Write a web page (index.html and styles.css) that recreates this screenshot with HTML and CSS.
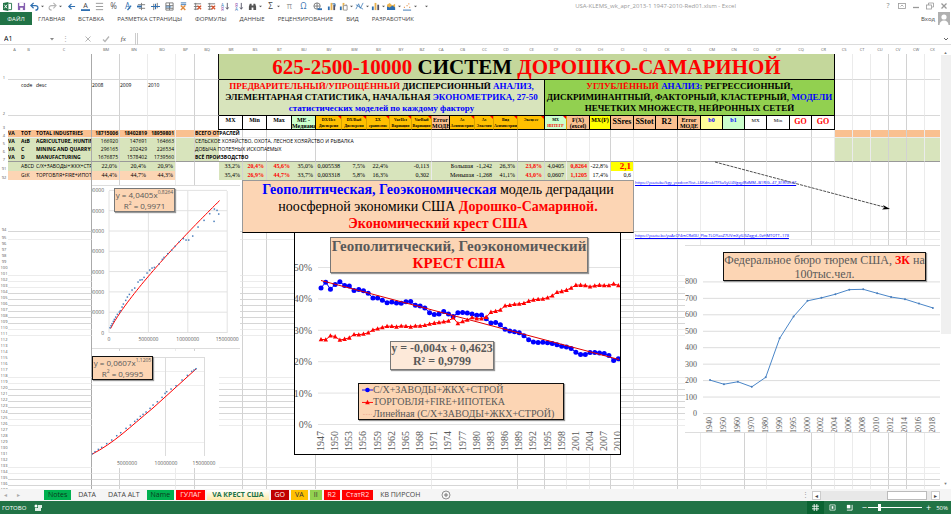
FILE: index.html
```html
<!DOCTYPE html>
<html lang="ru">
<head>
<meta charset="utf-8">
<title>Excel</title>
<link rel="stylesheet" href="styles.css">
</head>
<body>
<header class="titlebar">
  <div class="quick" id="quick"></div>
  <div class="doc-title">USA-KLEMS_wk_apr_2013-1 1947-2010-Red01.xlsm - Excel</div>
  <div class="win-buttons">
    <button type="button" aria-label="Справка">?</button>
    <button type="button" aria-label="Лента"><svg viewBox="0 0 8 8"><rect x=".5" y="1.5" width="7" height="5"/><path d="M2.500 4.500L4 3L5.500 4.500"/></svg></button>
    <button type="button" aria-label="Свернуть"><svg viewBox="0 0 8 8"><path d="M1 5.500h6" stroke-width="1.300"/></svg></button>
    <button type="button" aria-label="Окно"><svg viewBox="0 0 8 8"><rect x=".5" y="3" width="5" height="4"/><path d="M2.500 3V1h5v4H6"/></svg></button>
    <button type="button" aria-label="Закрыть"><svg viewBox="0 0 8 8"><path d="M1.500 1.500l5 5m0-5l-5 5" stroke-width="1.300"/></svg></button>
  </div>
</header>
<nav class="ribbon">
  <button type="button" class="file">ФАЙЛ</button>
  <button type="button">ГЛАВНАЯ</button>
  <button type="button">ВСТАВКА</button>
  <button type="button">РАЗМЕТКА СТРАНИЦЫ</button>
  <button type="button">ФОРМУЛЫ</button>
  <button type="button">ДАННЫЕ</button>
  <button type="button">РЕЦЕНЗИРОВАНИЕ</button>
  <button type="button">ВИД</button>
  <button type="button">РАЗРАБОТЧИК</button>
  <a href="#" class="login">Вход</a>
  <svg class="avatar" viewBox="0 0 12 13"><rect width="12" height="13" fill="#b0b0b0"/><circle cx="6" cy="5" r="2.600" fill="#fff"/><path d="M1.500 13c0-3 2-4.500 4.500-4.500s4.500 1.500 4.500 4.500z" fill="#fff"/></svg>
</nav>
<div class="formula">
  <input class="name-box" aria-label="Имя" value="A1">
  <svg class="drop" viewBox="0 0 6 6"><path d="M1 2h4L3 4.500z" fill="#888"/></svg>
  <span class="dots">⋮</span>
  <div class="fx">
    <svg viewBox="0 0 8 8"><path d="M1.500 1.500l5 5m0-5l-5 5" stroke="#b5b5b5" fill="none"/></svg>
    <svg viewBox="0 0 8 8"><path d="M1 4.500l2 2l4-5" stroke="#b5b5b5" fill="none" stroke-width="1.300"/></svg>
    <i>fx</i>
  </div>
  <input class="formula-box" aria-label="Формула">
  <svg class="drop" viewBox="0 0 6 6"><path d="M1 2l2 2l2-2" stroke="#666" fill="none"/></svg>
</div>
<main class="work">
  <div class="sheet">
    <table class="grid" id="grid">
      <colgroup id="cols"></colgroup>
      <thead><tr id="letters"></tr></thead>
      <tbody id="top">
        <tr class="r1"><th>1</th><td></td><td></td><td class="edge-l"></td><td class="s"></td><td class="w"></td><td class="w"></td><td class="s"></td><td class="edge"></td>
          <td colspan="27" class="title"><b>625-2500-10000</b> СИСТЕМ <b>ДОРОШКО-САМАРИНОЙ</b></td>
          <td class="w"></td><td class="w"></td><td class="s"></td><td class="s"></td><td class="w"></td><td></td></tr>
        <tr class="r2"><th>2</th><td></td><td>code</td><td class="edge-l">desc</td><td class="s">2008</td><td class="w">2009</td><td class="w">2010</td><td class="s"></td><td class="edge"></td>
          <td colspan="14" class="sub light"><b>ПРЕДВАРИТЕЛЬНЫЙ/УПРОЩЁННЫЙ</b> ДИСПЕРСИОННЫЙ <i>АНАЛИЗ,</i><br>ЭЛЕМЕНТАРНАЯ СТАТИСТИКА, НАЧАЛЬНАЯ <i>ЭКОНОМЕТРИКА, 27-50</i><br><i>статистических моделей по каждому фактору</i></td>
          <td colspan="13" class="sub vivid"><b>УГЛУБЛЁННЫЙ</b> <i>АНАЛИЗ:</i> РЕГРЕССИОННЫЙ,<br>ДИСКРИМИНАНТНЫЙ, ФАКТОРНЫЙ, КЛАСТЕРНЫЙ, <i>МОДЕЛИ</i><br>НЕЧЕТКИХ МНОЖЕСТВ, НЕЙРОННЫХ СЕТЕЙ</td>
          <td class="w"></td><td class="w"></td><td class="s"></td><td class="s"></td><td class="w"></td><td></td></tr>
        <tr class="r3"><th>3</th><td></td><td></td><td class="edge-l"></td><td class="s"></td><td class="w"></td><td class="w"></td><td class="s"></td><td class="edge"></td>
          <td class="k">MX</td><td class="k">Min</td><td class="k">Max</td><td class="k mint"><div>ME - Медиана</div></td>
          <td class="k gold t"><div>DX/Нез Дисперсия</div></td><td class="gold k t"><div>DX/Выб Дисперсия</div></td><td class="gold k t"><div>ΣX сравнение</div></td><td class="gold k t"><div>VarНез Вариация</div></td><td class="gold k t"><div>VarВыб Вариация</div></td>
          <td class="k peach"><div>Error МОДЕ</div></td>
          <td class="k gold t"><div>As Асимметрия</div></td><td class="k gold t"><div>As Эластич</div></td><td class="k gold t"><div>Вид Асимметрии</div></td><td class="k gold t m"><div>Эксцесс</div></td>
          <td class="k mint t"><div>MX <b>ИНТЕГР</b></div></td><td class="k peach"><div>F(X) (excel)</div></td><td class="k yellow">MX(F)</td>
          <td class="k peach big">SSres</td><td class="k peach big">SStot</td><td class="k peach big">R2</td><td class="k peach"><div>Error МОДЕ</div></td>
          <td class="k pale"><i>b0</i></td><td class="k mint"><i>b1</i></td><td class="k tiny">MX</td><td class="k tiny">Min</td><td class="k big"><b>GO</b></td><td class="k big edge"><b>GO</b></td>
          <td class="w"></td><td class="w"></td><td class="s"></td><td class="s"></td><td class="w"></td><td></td></tr>
      </tbody>
      <tbody id="data"></tbody>
      <tbody id="rest"></tbody>
    </table>

    <svg class="arrow" viewBox="0 0 180 52"><path d="M1 1L170 46" stroke="#222" stroke-dasharray="3 1" stroke-width=".8" fill="none"/><path d="M176 48l-7-4l1.500 2.500l-2.500 2z" fill="#000"/></svg>
    <a href="#" class="link link-a">https://youtube/kgy_ycxdccn?list=L6KdnokITFSu5yLI4VgqyIRdMM=B1RIG=47_81RIG=47</a>
    <a href="#" class="link link-b">https://youtu.be/yuAcCF4mCRd0U_Plw-TLOYaoZ7UVmXyIUSZqg;d=0zHMTOTT=178</a>

    <div class="note"><i>Геополитическая, Геоэкономическая</i> модель деградации<br>ноосферной экономики США <b>Дорошко-Самариной.</b><br><b>Экономический крест США</b></div>

    <figure class="chart fit-a"><svg id="fitA" viewBox="0 0 148 162"></svg><figcaption>y = 4,0405x<sup>0,8264</sup><br>R<sup>2</sup> = 0,9971</figcaption></figure>
    <figure class="chart fit-b"><svg id="fitB" viewBox="0 0 127 117"></svg><figcaption>y = 0,0607x<sup>1,1205</sup><br>R<sup>2</sup> = 0,9995</figcaption></figure>

    <figure class="chart cross">
      <svg id="cross" viewBox="0 0 325 221"></svg>
      <figcaption>Геополитический, Геоэкономический<br><b>КРЕСТ США</b></figcaption>
      <div class="equation">y = -0,004x + 0,4623<br>R² = 0,9799</div>
      <ul class="legend">
        <li><svg viewBox="0 0 12 8"><path d="M0 4h12" stroke="#00f"/><circle cx="6" cy="4" r="2.500" fill="#00f"/></svg>С/Х+ЗАВОДЫ+ЖКХ+СТРОЙ</li>
        <li><svg viewBox="0 0 12 8"><path d="M0 4.500h12" stroke="red"/><path d="M6 1.500l2.500 5h-5z" fill="red"/></svg>ТОРГОВЛЯ+FIRE+ИПОТЕКА</li>
        <li><svg viewBox="0 0 12 8"><path d="M1 4.500h10" stroke="#e9a08c" stroke-dasharray="2 1" stroke-width=".6"/></svg>Линейная (С/Х+ЗАВОДЫ+ЖКХ+СТРОЙ)</li>
      </ul>
    </figure>

    <figure class="chart prison"><svg id="prison" viewBox="0 0 255 186"></svg><figcaption>Федеральное бюро тюрем США, <b>ЗК</b> на 100тыс.чел.</figcaption></figure>
  </div>
  <div class="vscroll"><span>▲</span><div></div><span>▼</span></div>
</main>
<footer>
  <div class="tabs">
    <span class="nav">◂</span><span class="nav">▸</span>
    <button type="button" class="green first">Notes</button>
    <button type="button" class="plain">DATA</button>
    <button type="button" class="plain">DATA ALT</button>
    <button type="button" class="green">Name</button>
    <button type="button" class="red">ГУЛАГ</button>
    <button type="button" class="active">VA КРЕСТ США</button>
    <button type="button" class="dark">GO</button>
    <button type="button" class="amber">VA</button>
    <button type="button" class="lime">II</button>
    <button type="button" class="red">R2</button>
    <button type="button" class="red">СтатR2</button>
    <button type="button" class="plain">КВ ПИРСОН</button>
    <button type="button" class="add" aria-label="Новый лист"><svg viewBox="0 0 10 10"><circle cx="5" cy="5" r="4" fill="none" stroke="#777" stroke-width=".8"/><path d="M5 3v4M3 5h4" stroke="#777"/></svg></button>
    <div class="hscroll"><span class="grip">⋮</span><span class="arr">◂</span><div class="track"><div></div></div><span class="arr">▸</span></div>
  </div>
  <div class="status">
    <span>ГОТОВО</span>
    <svg class="rec" viewBox="0 0 8 8"><circle cx="2" cy="2" r="1.500" fill="#fff"/><path d="M4 1h4v3H4zM1 4h6v3H1z" fill="#dfeee5"/></svg>
    <div class="views">
      <button type="button" class="on" aria-label="Обычный"><svg viewBox="0 0 8 8"><path d="M0 2.500h8M0 5.500h8M2.500 0v8M5.500 0v8" stroke="#fff"/></svg></button>
      <button type="button" aria-label="Разметка"><svg viewBox="0 0 8 8"><path d="M1 1h6v6H1z" fill="none" stroke="#cfe3d7"/><path d="M3 2.500h2v3H3z" fill="#fff"/></svg></button>
      <button type="button" aria-label="Страничный"><svg viewBox="0 0 8 8"><path d="M1 1h4v4H1z" fill="#fff"/><path d="M7 1v6H1" fill="none" stroke="#fff"/></svg></button>
    </div>
    <span class="sign">−</span>
    <input type="range" aria-label="Масштаб" min="10" max="400" value="90">
    <span class="sign">+</span>
    <span class="pct">50%</span>
  </div>
</footer>
<script src="app.js"></script>
</body>
</html>
```
FILE: styles.css
```css
* { box-sizing: border-box; }
body { margin: 0; height: 100vh; display: flex; flex-direction: column; overflow: hidden; background: #fff; font-family: "Open Sans", "Noto Sans", sans-serif; font-size: 6px; color: #444; }
button { border: 0; padding: 0; margin: 0; background: none; font: inherit; color: inherit; }
input { border: 0; padding: 0; margin: 0; background: none; font: inherit; outline: 0; min-width: 0; }
a { color: inherit; text-decoration: none; }
svg { display: block; }

.titlebar { display: flex; align-items: center; height: 12px; flex: none; }
.quick { display: flex; flex: 1; }
.quick button { width: 14px; height: 12px; display: flex; align-items: center; justify-content: center; }
.quick .wide { width: 18px; }
.quick .mid { width: 16px; }
.quick svg { width: 9px; height: 9px; flex: none; overflow: visible; }
.quick .caret { width: 3px; height: 3px; margin-left: 2px; }
.doc-title { color: #999; margin-right: 148px; }
.win-buttons { display: flex; gap: 6px; color: #888; padding-right: 3px; }
.win-buttons button { width: 8px; height: 8px; line-height: 8px; font-size: 7px; }
.win-buttons svg { width: 8px; height: 8px; fill: none; stroke: #999; stroke-width: .8; }

.ribbon { display: flex; align-items: center; gap: 13px; height: 13px; flex: none; margin-bottom: 8px; font-size: 6px; }
.ribbon .file { background: #217346; color: #fff; width: 32px; height: 13px; margin-right: -7px; }
.login { margin-left: auto; }
.avatar { width: 12px; height: 13px; margin: 0 1px 0 -10px; }

.formula { display: flex; align-items: center; height: 12px; flex: none; border-bottom: 1px solid #dcdcdc; margin-bottom: 2px; font-size: 7px; padding-right: 2px; }
.name-box { width: 49px; padding-left: 4px; }
.drop { width: 6px; height: 6px; }
.dots { width: 20px; text-align: center; color: #aaa; }
.fx { display: flex; align-items: center; justify-content: space-around; width: 61px; height: 12px; border-right: 1px solid #ccc; padding: 0 4px; font-family: "Liberation Serif", serif; }
.fx svg { width: 8px; height: 8px; }
.formula-box { flex: 1; height: 12px; margin-left: 1px; border-left: 1px solid #ccc; }

.work { flex: 1; display: flex; min-height: 0; }
.sheet { flex: 1; position: relative; overflow: hidden; min-width: 0; }
.vscroll { width: 11px; display: flex; flex-direction: column; align-items: center; font-size: 4px; color: #777; padding: 3px 0; }
.vscroll div { width: 10px; height: 64%; background: #f0f0f0; margin-bottom: auto; }

.grid { width: 100%; table-layout: fixed; border-collapse: separate; border-spacing: 0; font-size: 5px; line-height: 6px; color: #000; }
.grid td, .grid th { padding: 0; border: 0 solid #e4e4e4; font-weight: normal; white-space: nowrap; vertical-align: top; }
.grid thead th { height: 7px; font-size: 4px; line-height: 6px; color: #666; }
.grid tbody th { font-size: 4px; line-height: 5px; color: #555; text-align: center; vertical-align: bottom; }
.grid td.s { border-right: 1px solid #d2d2d2; }
.grid td.w { border-right: 1px solid #ebebeb; }
.grid td.edge-l { border-right: 1px solid #aaa; }
.grid td.edge { border-right: 1px solid #111; }
.grid b { color: red; }
.grid i { color: #00f; font-style: normal; font-weight: bold; }

.r1 { height: 26px; }
.r2 { height: 36px; }
.r3 { height: 14px; }
.r1 td, .r2 td { border-bottom: 1px solid #d8d8d8; }
.r2 td { padding-top: 2px; }
.grid .title { background: #c4d79b; border-bottom: 1px solid #000; border-right: 1px solid #000; text-align: center; vertical-align: middle; font: bold 21px/24px "Liberation Serif", serif; }
.grid .sub { font: bold 9px/11px "Liberation Serif", serif; text-align: center; vertical-align: middle; padding: 0; border-bottom: 1px solid #000; border-right: 1px solid #000; }
.light { background: #d8e4bc; }
.vivid { background: #92d050; }
.grid .k { font: bold 6px/7px "Liberation Serif", serif; text-align: center; border-bottom: 1px solid #000; border-right: 1px solid #000; padding-top: 1px; overflow: hidden; }
.k div { height: 12px; overflow: hidden; white-space: normal; line-height: 6px; }
.grid .t { font-size: 4px; border-right-color: #d9a300; position: relative; }
.t::after { content: ""; position: absolute; top: 0; right: 0; border-top: 3px solid red; border-left: 3px solid transparent; }
.grid .m, .grid .edge { border-right-color: #000; }
.grid .big { font-size: 8px; line-height: 10px; }
.grid .tiny { font-size: 5px; font-weight: normal; }
.mint { background: #ccffcc; }
.gold { background: #ffc000; }
.peach { background: #fac090; }
.yellow { background: #ff0; }
.pale { background: #ff9; }
.salmon { background: #fcd5b4; }

.d { height: 8px; }
.d td { font-size: 5px; line-height: 7px; }
.d td.bold { font-weight: bold; }
.grid .line td { border-bottom: 1px solid #999; }
.grid .num { text-align: right; padding-right: 1px; }
.grid .clip { overflow: hidden; }
.p { height: 9px; }
.p td { line-height: 9px; }
.p td.n { font-family: "Liberation Serif", serif; font-size: 6px; text-align: right; padding-right: 2px; overflow: hidden; }
.p td.hot { color: red; font-weight: bold; }
.grid .p td.score { background: #ff0; font-size: 9px; }
.tall { height: 52px; }
.mid { height: 8px; }
.row { height: 6px; }
.grid .row th { line-height: 5px; }
.ln-w td { border-bottom: 1px solid #ececec; }
.ln-s td { border-bottom: 1px solid #d6d6d6; }

.arrow { position: absolute; left: 714px; top: 114px; width: 180px; height: 52px; }
.link { position: absolute; left: 635px; color: #00f; text-decoration: underline; font-size: 4px; line-height: 5px; white-space: nowrap; }
.link-a { top: 133px; }
.link-b { top: 186px; }
.note { position: absolute; left: 242px; top: 133px; width: 392px; height: 53px; background: #fcd5b4; border: 1px solid #999; border-bottom-color: #000; text-align: center; font: 14px/17px "Liberation Serif", serif; color: #000; white-space: nowrap; }
.note i, .note b { font-style: normal; font-weight: bold; }
.note i { color: #00f; }
.note b { color: red; }

.chart { position: absolute; margin: 0; background: #fff; overflow: hidden; color: #595959; }
.chart > svg { width: 100%; height: 100%; }
.chart figcaption, .equation, .legend { position: absolute; background: #fcd5b4; text-align: center; white-space: nowrap; border: 1px solid #777; box-shadow: 1px 1px 1px #999; }
.chart b { color: red; }
.chart text { fill: #595959; }
.fit-a { left: 92px; top: 138px; width: 148px; height: 164px; border-top: 1px solid #ddd; border-bottom: 1px solid #ddd; }
.fit-b { left: 92px; top: 304px; width: 127px; height: 117px; }
.fit-a figcaption, .fit-b figcaption { width: 61px; height: 24px; font-size: 8px; line-height: 11px; }
.fit-a figcaption { left: 22px; top: 2px; }
.fit-b figcaption { left: 0; top: 5px; border-color: #111; }
sup { font-size: 5px; line-height: 0; }
.cross { left: 294px; top: 185px; width: 327px; height: 223px; border: 1px solid #000; font-family: "Liberation Serif", serif; }
.cross figcaption { left: 35px; top: 4px; width: 258px; height: 36px; font-weight: bold; font-size: 15px; line-height: 17px; }
.equation { left: 95px; top: 108px; width: 104px; height: 29px; background: #fde9d9; font-weight: bold; font-size: 12px; line-height: 13px; }
.legend { left: 63px; top: 150px; width: 206px; height: 37px; margin: 0; padding: 0 3px; list-style: none; border-color: #111; font-size: 10px; line-height: 12px; }
.legend li { display: flex; align-items: center; }
.legend svg { width: 11px; height: 8px; }
.prison { left: 685px; top: 198px; width: 255px; height: 188px; border-top: 1px solid #ddd; border-bottom: 1px solid #ddd; font-family: "Liberation Serif", serif; }
.prison figcaption { left: 38px; top: 6px; width: 203px; height: 29px; font-size: 12px; line-height: 14px; white-space: normal; border-color: #111; }
.axis8 { font-size: 8px; }
.axis5 { font-size: 5px; }
.axis10 { font-size: 10px; }

.tabs { display: flex; align-items: center; height: 12px; background: #f5f5f5; font-size: 7px; line-height: 10px; gap: 2px; }
.nav { width: 11px; text-align: center; color: #aaa; font-size: 6px; }
.tabs button { height: 10px; padding: 0 4px; white-space: nowrap; }
.tabs .first { margin-left: 18px; }
.tabs .plain { padding: 0 5px; }
.tabs .green { background: #00b050; color: #0b3a1e; }
.tabs .red { background: red; color: #ffe0e0; }
.tabs .dark { background: #c00000; color: #fff; }
.tabs .amber { background: #ffc000; color: #333; }
.tabs .lime { background: #92d050; color: #333; }
.tabs .active { background: linear-gradient(#fff, #ffe9a8); color: #217346; font-weight: bold; padding: 0 5px; }
.tabs .add { margin-left: 10px; }
.add svg { width: 10px; height: 10px; }
.hscroll { margin-left: auto; display: flex; align-items: center; padding-right: 11px; }
.hscroll .grip { width: 10px; color: #999; }
.arr { width: 9px; height: 9px; line-height: 8px; background: #fff; border: 1px solid #ccc; text-align: center; font-size: 6px; }
.track { width: 110px; height: 9px; background: #e8e8e8; display: flex; justify-content: flex-end; padding-right: 4px; }
.track div { width: 40px; background: #fff; border: 1px solid #bbb; }
.status { display: flex; align-items: center; height: 13px; background: #217346; color: #fff; padding: 0 3px 0 2px; }
.rec { width: 8px; height: 8px; margin-left: 8px; }
.views { margin-left: auto; display: flex; }
.views button { width: 17px; height: 13px; display: flex; align-items: center; justify-content: center; }
.views .on { background: #0a6332; }
.views svg { width: 7px; height: 7px; }
.sign { font-size: 9px; line-height: 9px; margin: 0 1px 0 4px; }
.sign + .pct { margin-left: 4px; }
.status input { appearance: none; width: 54px; height: 9px; background: linear-gradient(#fff, #fff) center / 100% 1px no-repeat; }
.status input::-webkit-slider-thumb { appearance: none; width: 3px; height: 7px; background: #fff; }
```
FILE: app.js
```js
const byId = id => document.getElementById(id);

/* Quick access toolbar */
const B = '#2f6fb0', G = '#777', O = '#e08a3c';
const glyph = (t, c, extra = '') => `<text x="5" y="8" text-anchor="middle" font-size="9" fill="${c}">${t}</text>${extra}`;
const bars = extra => `<path d="M1 9V5h2v4z" fill="${B}"/><path d="M4 9V1h2v8z" fill="#e9b24f"/><path d="M7 9V3h2v6z" fill="#556"/>${extra}`;
const table = c => `<path d="M1 2h8M1 5h8M1 8h5M3 1v8" stroke="${G}" fill="none"/><path d="M5 4l4 4m0-4l-4 4" stroke="${c}" stroke-width="1.400"/>`;
const sort = '<path d="M7 1v7m-1.500-2L7 8l1.500-2" stroke="#556" fill="none"/>';
const tools = [
  ['Excel', '', '<path d="M0 1l6-1v10L0 9z" fill="#217346"/><path d="M6 1.500h3.500v7H6" fill="none" stroke="#217346"/><path d="M1.500 3l3 4m0-4l-3 4" stroke="#fff"/>'],
  ['Сохранить', '', '<path d="M1 1h8v8H1z" fill="#8660b0"/><path d="M2.500 1h5v3.500h-5zM3.500 6.500h3V9h-3z" fill="#fff"/>'],
  ['Отменить', 'wide', `<path d="M1 4h5c4 0 3.500 5 0 5M4 1L1 4l3 3" stroke="${B}" fill="none" stroke-width="1.400"/>`],
  ['Вернуть', 'wide', '<path d="M9 4H4C0 4 .5 9 4 9M6 1l3 3l-3 3" stroke="#b5b5b5" fill="none" stroke-width="1.200"/>'],
  ['Назад', '', `<path d="M9 5H2m3-3L2 5l3 3" stroke="${B}" fill="none" stroke-width="1.300"/>`],
  ['Цвет текста', '', `<text x="5" y="7" text-anchor="middle" font-size="8" fill="#444">A</text><path d="M0 9h10" stroke="${B}" stroke-width="2"/>`],
  ['Выравнивание', '', '<path d="M1 1.500h8M1 5h8M1 8.500h8" stroke="#777" stroke-width=".8"/>'],
  ['Процент', '', glyph('%', '#555')],
  ['Шрифт', '', glyph('A', B, `<path d="M5 9l4-5" stroke="${B}" stroke-width="1.500"/>`)],
  ['Столбцы', '', `<path d="M1 3h8M2 7h7M5 1v8" stroke="${G}"/><path d="M0 5h5" stroke="${B}" stroke-width="2"/>`],
  ['Строки', '', `<path d="M3 2v7M7 1v6" stroke="${G}"/><path d="M0 5h10M5 2v6" stroke="${B}" stroke-width="1.300"/>`],
  ['Вставить', '', `<path d="M1 1h8v8H1zM1 4h8M1 7h8M5 1v8" fill="none" stroke="${G}"/><path d="M1 5.500h6" stroke="${B}"/>`],
  ['Удалить', '', `<path d="M2 1h6M2 3h6" stroke="${B}"/><path d="M2 4l5 5m0-5l-5 5" stroke="${O}" stroke-width="1.500"/>`],
  ['Удалить строки', '', table('#d9532c')],
  ['Удалить лист', '', table('#d9532c')],
  ['А-Я', '', `<text x="0" y="5" font-size="5" fill="${B}">А</text><text x="0" y="10" font-size="5" fill="#84a">Я</text>${sort}`],
  ['Я-А', '', `<text x="0" y="5" font-size="5" fill="#84a">Я</text><text x="0" y="10" font-size="5" fill="${B}">А</text>${sort}`],
  ['Найти', 'wide', '<path d="M1 9V5l1-3h2v2h2V2h2l1 3v4H6V6H4v3z" fill="#555"/>'],
  ['Сумма', 'wide', glyph('Σ', '#444')],
  ['Пи', '', glyph('π', '#999')],
  ['Символ', '', glyph('Ω', B)],
  ['Ссылка', '', `<circle cx="4.500" cy="4.500" r="3.500" fill="none" stroke="${G}"/><path d="M1 4.500h7M4.500 1v7" stroke="${G}"/><path d="M5 8h5" stroke="${B}" stroke-width="2"/>`],
  ['Диаграмма', '', bars(`<path d="M6 2h3v3" stroke="${B}" fill="none"/>`)],
  ['Сводная', 'mid', bars('<path d="M5 4h4v5H5z" fill="#fff" stroke="#999"/>')],
  ['Функции', 'mid', `<path d="M1 8L4 2l2 5l3-6M1 3l8 5" stroke="${B}" fill="none" stroke-width=".8"/>`],
  ['Гистограмма', 'mid', bars('')],
  ['С областями', 'mid', `<path d="M0 9V3l3-2l3 3l3-2v7z" fill="#e9b24f"/><path d="M0 9V5l3 1l3-2l3 2v3z" fill="${B}"/>`],
  ['Точечная', 'mid', `<path d="M0 9h9" stroke="${B}"/><path d="M1 6h1M4 4h1M7 6h1M6 2h1" stroke="${O}" stroke-width="1.500"/>`]
];
const caret = '<svg class="caret" viewBox="0 0 4 4"><path d="M0 1h4L2 3z" fill="#555"/></svg>';
byId('quick').innerHTML = tools.map(([name, cls, art]) =>
  `<button type="button" class="${cls}" aria-label="${name}"><svg viewBox="0 0 10 10">${art}</svg>${cls ? caret : ''}</button>`
).join('') + `<button type="button" aria-label="Ещё">${caret}</button>`;

/* Columns: letter, width, grid line weight */
const cols = [
  ['', 8, ''], ['A', 13, ''], ['B', 15, ''], ['C', 56, 'edge-l'], ['BM', 28, 's'], ['BN', 28, ''], ['BO', 28, 'w'], ['BP', 19, 's'], ['BQ', 24, ''],
  ['BR', 24, 's'], ['BS', 24, 's'], ['BT', 25, ''], ['BU', 24, 's'], ['BV', 26, ''], ['BW', 25, ''], ['BX', 23, ''], ['BY', 22, ''], ['BZ', 20, 'w'],
  ['CA', 18, ''], ['CB', 25, ''], ['CC', 19, ''], ['CD', 24, 's'], ['CE', 27, 's'], ['CF', 22, 'w'], ['CG', 23, 'w'], ['CH', 21, 's'], ['CI', 23, 'w'],
  ['CJ', 22, ''], ['CK', 22, 's'], ['CL', 23, 'w'], ['CM', 22, ''], ['CN', 22, 's'], ['CO', 22, 'w'], ['CP', 23, ''], ['CQ', 22, 's'], ['CR', 23, 'w'],
  ['CS', 18, 'w'], ['CT', 18, 'w'], ['CU', 18, 's'], ['CV', 18, 's'], ['CW', 18, 'w'], ['CX', 0, '']
];
byId('cols').innerHTML = cols.map(c => c[1] ? `<col style="width:${c[1]}px">` : '<col>').join('');
byId('letters').innerHTML = cols.map(c => `<th>${c[0]}</th>`).join('');

const rowHtml = (label, cls, cellOf) => `<tr class="${cls}"><th>${label}</th>` +
  cols.slice(1).map((c, i) => {
    const [text = '', k = ''] = cellOf(c[0], i + 1) || [];
    return `<td class="${c[2]} ${k}">${text}</td>`;
  }).join('') + '</tr>';

/* Industry rows */
const industries = [
  [4, 'VA', 'TOT', 'TOTAL INDUSTRIES', '18715006', '18402819', '18959801', 'ВСЕГО ОТРАСЛЕЙ', 1],
  [5, 'VA', 'AtB', 'AGRICULTURE, HUNTING', '166920', '147691', '164663', 'СЕЛЬСКОЕ ХОЗЯЙСТВО, ОХОТА, ЛЕСНОЕ ХОЗЯЙСТВО И РЫБАЛКА', 0],
  [6, 'VA', 'C', 'MINING AND QUARRYING', '296165', '202429', '226534', 'ДОБЫЧА ПОЛЕЗНЫХ ИСКОПАЕМЫХ', 0],
  [7, 'VA', 'D', 'MANUFACTURING', '1676875', '1578402', '1739560', 'ВСЁ ПРОИЗВОДСТВО', 1]
];
byId('data').innerHTML = industries.map((r, n) => rowHtml(r[0], 'd' + (n === 3 ? ' line' : n ? '' : ' ln-w'), (name, i) => {
  const fill = i < 9 || i > 35 ? (n ? 'light' : 'peach') : '';
  if (i < 4) return [r[i], fill + ' bold clip'];
  if (i < 7) return [r[i], fill + ' num ' + (n ? '' : 'bold')];
  if (i === 8) return [r[7], fill + (r[8] ? ' bold' : '')];
  return ['', fill];
})).join('');

const groups = [
  [91, 'ABCD', 'С/Х+ЗАВОДЫ+ЖКХ+СТРОЙ', '22,0%', '20,4%', '20,9%',
    { BR: '33,2%', BS: '20,4%', BT: '45,6%', BU: '35,0%', BV: '0,005538', BW: '7,5%', BX: '22,4%', BZ: '-0,113', CB: 'Большая', CC: '-1,242', CD: '26,3%', CE: '23,8%', CF: '4,0405', CG: '0,8264', CH: '-22,8%', CI: '2,1' }],
  [92, 'GtK', 'ТОРГОВЛЯ+FIRE+ИПОТЕКА', '44,4%', '44,7%', '44,3%',
    { BR: '35,4%', BS: '26,9%', BT: '44,7%', BU: '33,7%', BV: '0,003318', BW: '5,8%', BX: '16,3%', BZ: '0,302', CB: 'Меньшая', CC: '-1,268', CD: '41,1%', CE: '43,0%', CF: '0,0607', CG: '1,1205', CH: '17,4%', CI: '0,6' }]
];
const hot = ['BS', 'BT', 'CE', 'CG'];
byId('data').innerHTML += groups.map((r, n) => rowHtml(r[0], 'p', (name, i) => {
  const left = n ? 'salmon' : 'light';
  if (i === 1) return ['', left];
  if (i < 4) return [r[i - 1], left + ' bold' + (i === 3 ? ' clip' : '')];
  if (i < 7) return [r[i - 1], left + ' n'];
  if (i < 9 || i > 26) return ['', ''];
  let k = i < 25 ? 'light n' : 'n';
  if (hot.includes(name)) k += ' hot';
  if (name === 'CI' && !n) k += ' hot score';
  return [r[6][name], k];
})).join('');

/* Empty rows under the data */
let rest = rowHtml(94, 'tall ln-s', () => []) + rowHtml(95, 'mid ln-w', () => []);
for (let n = 96; n <= 137; n++) {
  const strong = (n > 103 && n < 110) || (n > 119 && n < 125) || n > 134;
  const weak = (n > 100 && n < 112) || (n > 117 && n < 127) || n > 132;
  rest += rowHtml(n, 'row ' + (strong ? 'ln-s' : weak ? 'ln-w' : ''), () => []);
}
byId('rest').innerHTML = rest;

/* Charts */
const line = (x1, y1, x2, y2, c = '#dcdcdc') => `<path d="M${x1} ${y1}L${x2} ${y2}" stroke="${c}"/>`;
const label = (x, y, t, cls, anchor = 'end') => `<text x="${x}" y="${y}" class="${cls}" text-anchor="${anchor}">${t}</text>`;
const upright = (x, y, t, cls) => `<text transform="translate(${x} ${y}) rotate(-90)" class="${cls}" text-anchor="end">${t}</text>`;
const poly = (pts, c, w = 1) => `<polyline points="${pts.map(p => p.join()).join(' ')}" fill="none" stroke="${c}" stroke-width="${w}"/>`;
const dots = s => s.split(' ').map(p => p.split(',')).map(([x, y]) => `<rect x="${x / 3 - 92.7}" y="${y / 3 - .7}" width="1.500" height="1.500" fill="#4a7ebb"/>`).join('');

let a = '';
for (let i = 0; i < 8; i++) {
  const y = 146.5 - i * 20.3;
  a += line(17, y, 135, y, '#e2e2e2') + label(12, y + 2, i * 500000, 'axis5');
}
for (let i = 0; i < 4; i++) a += line(17 + i * 39.4, 5, 17 + i * 39.4, 147, '#e2e2e2') + label(17 + i * 39.4, 155, i * 5000000, 'axis5', 'middle');
const curve = [];
for (let x = 2e5; x <= 14e6; x += 3e5) curve.push([17 + x / 15e6 * 118.5, 146.5 - 4.0405 * x ** 0.8264 / 3.5e6 * 142]);
a += poly(curve, 'red');
a += `<g transform="translate(0 -6)">${dots('330,443 333,437 336,431 340,424 343,418 347,411 352,403 358,396 361,392 366,381 370,372 377,361 382,351 388,343 396,330 404,324 414,306 420,300 426,299 432,292 441,279 449,270 456,264 463,262 477,252 487,238 492,232 503,221 515,210 525,199 538,185 550,176 558,180 566,180 578,168 594,141 612,121 629,101 642,124 643,87 651,91 656,102')}</g>`;
byId('fitA').innerHTML = a;

let b = line(0, 6.5, 112, 6.5) + line(0, 20.5, 112, 20.5, '#eee') + line(0, 34.5, 112, 34.5, '#eee') + line(0, 91.5, 112, 91.5, '#eee') + line(73.5, 6, 73.5, 105) + line(112.5, 6, 112.5, 105);
b += label(35, 114, '5000000', 'axis5', 'middle') + label(74, 114, '10000000', 'axis5', 'middle') + label(112, 114, '15000000', 'axis5', 'middle');
b += `<path d="M-.5 103.500C22 92 38 76 61 57L104 18" stroke="red" fill="none"/>`;
b += `<g transform="translate(0 -171)">${dots('277,821 285,815 295,808 305,802 320,791 335,780 350,767 362,758 378,745 391,735 404,724 412,718 421,709 429,703 438,696 450,685 459,675 472,665 486,652 495,640 500,635 513,627 528,617 546,600 562,586 575,574 582,570 588,566')}</g>`;
byId('fitB').innerHTML = b;

const farms = [43.5, 45.3, 43.1, 44.6, 45.5, 44.3, 44.1, 42.7, 43, 42.6, 41.8, 40.3, 40.3, 39.6, 38.8, 39, 38.7, 38.6, 39.1, 39.2, 38, 37.7, 37.1, 35.6, 35, 35.2, 36, 35.2, 34.4, 35.6, 35.7, 35.5, 35.2, 34.8, 34.9, 33.7, 32.3, 32.5, 31.8, 30.3, 29.8, 29.5, 29.2, 28.3, 27, 26.3, 26.1, 26.2, 26, 25.8, 25.4, 24.9, 24.7, 24.2, 23, 22.3, 22.3, 22.9, 22.9, 22.8, 22.6, 22, 20.4, 20.9];
const trade = [27.1, 27, 28.3, 28, 26.9, 27.2, 27.6, 28.7, 28.6, 28.8, 29.2, 30.1, 30.5, 30.9, 31.3, 31.3, 31.1, 31.4, 31.3, 31.1, 31.4, 31.4, 31.6, 32, 32.3, 32.5, 32.7, 33, 34, 32.2, 32.8, 33.3, 34.1, 33.7, 33.7, 34.2, 35.8, 36.1, 36.5, 37.8, 38, 38.3, 38.4, 38.6, 39.3, 39.7, 39.9, 40, 40.4, 41, 42.1, 42.4, 42.8, 43.5, 44.4, 44.4, 44.3, 43.9, 44.2, 44.4, 44.3, 44.3, 44.8, 44.3];
const place = list => list.map((v, i) => [26 + i * 4.72, 191.5 - v * 3.14]);
let c = '';
for (let v = 0; v <= 50; v += 10) c += line(23, 191.5 - v * 3.14, 325, 191.5 - v * 3.14, '#e2e2e2') + label(17, 195 - v * 3.14, v + '%', 'axis10');
for (let i = 0; i < 64; i += 3) c += upright(29 + i * 4.72, 198, 1947 + i, 'axis10');
c += poly(place(farms), '#00f') + place(farms).map(([x, y]) => `<circle cx="${x}" cy="${y}" r="2.500" fill="#00f"/>`).join('');
c += poly(place(trade), 'red') + place(trade).map(([x, y]) => `<path d="M${x} ${y - 2.5}l2.300 4.300h-4.600z" fill="red"/>`).join('');
c += line(26, 47.5, 324, 126.5, '#e00000');
byId('cross').innerHTML = c;

const years = [1940, 1950, 1960, 1970, 1980, 1990, 1995, 2000, 2002, 2004, 2006, 2008, 2010, 2012, 2014, 2016, 2018];
const jailed = [203, 178, 193, 162, 220, 457, 590, 685, 703, 725, 753, 755, 731, 708, 695, 668, 642];
let p = '';
for (let v = 0; v <= 800; v += 100) p += line(18, 167.5 - v * .1645, 255, 167.5 - v * .1645, '#dcdcdc') + label(12, 170 - v * .1645, v, 'axis8');
const spots = jailed.map((v, i) => [25 + i * 13.93, 167.5 - v * .1645]);
p += poly(spots, '#4a86c8') + spots.map(([x, y]) => `<circle cx="${x}" cy="${y}" r="1" fill="#4a7ebb"/>`).join('');
years.forEach((y, i) => { p += upright(27 + i * 13.93, 171, y, 'axis8'); });
byId('prison').innerHTML = p;
```
